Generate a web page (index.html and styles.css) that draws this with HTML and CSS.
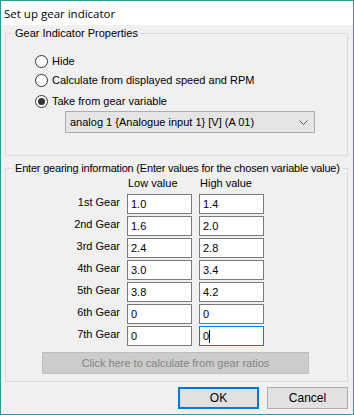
FILE: index.html
```html
<!DOCTYPE html>
<html>
<head>
<title>Set up gear indicator</title>
<link rel="stylesheet" href="styles.css">
</head>
<body>
<div class="window">
    <!-- Title bar -->
    <div class="titlebar">Set up gear indicator</div>

    <div class="client">
        <!-- Gear indicator properties -->
        <fieldset class="group group-props">
            <legend>Gear Indicator Properties</legend>
            <div class="radio radio-first"><span class="radio-dot"></span>Hide</div>
            <div class="radio radio-second"><span class="radio-dot"></span>Calculate from displayed speed and RPM</div>
            <div class="radio radio-third"><span class="radio-dot checked"></span>Take from gear variable</div>
            <div class="combo">
                <span>analog 1 {Analogue input 1} [V] (A 01)</span>
                <svg class="chevron" width="9" height="5" viewBox="0 0 9 5"><path d="M0.5 0.5 L4.5 4.5 L8.5 0.5" fill="none" stroke="#555" stroke-width="1"/></svg>
            </div>
        </fieldset>

        <!-- Gearing information -->
        <fieldset class="group group-gears">
            <legend>Enter gearing information (Enter values for the chosen variable value)</legend>
            <div class="gear-grid">
                <span></span><span class="col-head">Low value</span><span class="col-head">High value</span>
                <span class="gear-label">1st Gear</span><span class="field">1.0</span><span class="field">1.4</span>
                <span class="gear-label">2nd Gear</span><span class="field">1.6</span><span class="field">2.0</span>
                <span class="gear-label">3rd Gear</span><span class="field">2.4</span><span class="field">2.8</span>
                <span class="gear-label">4th Gear</span><span class="field">3.0</span><span class="field">3.4</span>
                <span class="gear-label">5th Gear</span><span class="field">3.8</span><span class="field">4.2</span>
                <span class="gear-label">6th Gear</span><span class="field">0</span><span class="field">0</span>
                <span class="gear-label">7th Gear</span><span class="field">0</span><span class="field focused">0<span class="caret"></span></span>
            </div>
            <div class="calc-btn">Click here to calculate from gear ratios</div>
        </fieldset>

        <!-- Dialog buttons -->
        <div class="actions">
            <div class="btn btn-default">OK</div>
            <div class="btn">Cancel</div>
        </div>
    </div>
</div>
</body>
</html>
```

FILE: styles.css
```css
body {
    margin: 0px;
    background: #f0f0f0;
    font-family: "Liberation Sans", Arial, sans-serif;
    font-size: 11px;
    line-height: 13px;
    color: #000;
}
.window {
    width: 354px;
    height: 415px;
    box-sizing: border-box;
    border: 1px solid #2b9a9c;
    background: #f0f0f0;
}
.titlebar {
    height: 24px;
    background: #fff;
    padding-left: 3px;
    font-family: "Open Sans", "Noto Sans", sans-serif;
    font-size: 11.5px;
    line-height: 25px;
}
.client {
    padding: 0px 5px 0px 4px;
}
.group {
    margin: 0px;
    padding: 0px;
    border: 1px solid #dcdcdc;
    min-width: 0;
}
.group legend {
    margin-left: 7px;
    padding: 0px 2px;
    line-height: 13px;
    white-space: nowrap;
}
.group-props {
    margin-top: 2px;
    padding-bottom: 22px;
}
.group-gears {
    margin-top: 6px;
    padding-bottom: 7px;
}
.group-gears legend {
    letter-spacing: -0.2px;
}
.radio {
    display: flex;
    align-items: center;
    height: 13px;
    margin-left: 29px;
    white-space: nowrap;
}
.radio-first {
    margin-top: 15px;
}
.radio-second {
    margin-top: 6px;
}
.radio-third {
    margin-top: 8px;
}
.radio-dot {
    width: 13px;
    height: 13px;
    box-sizing: border-box;
    border: 1px solid #333;
    border-radius: 50%;
    background: #fff;
    margin-right: 4px;
    display: flex;
    align-items: center;
    justify-content: center;
}
.radio-dot.checked::after {
    content: "";
    width: 7px;
    height: 7px;
    border-radius: 50%;
    background: #333;
}
.combo {
    margin: 3px 0px 0px 59px;
    width: 250px;
    height: 22px;
    box-sizing: border-box;
    border: 1px solid #adadad;
    background: #e5e5e5;
    display: flex;
    align-items: center;
    justify-content: space-between;
    padding: 0px 6px 0px 4px;
}
.gear-grid {
    display: grid;
    grid-template-columns: 114px 65px 65px;
    column-gap: 7px;
    row-gap: 2px;
    margin-top: 2px;
}
.col-head {
    height: 15px;
    line-height: 13px;
    padding-left: 1px;
}
.gear-label {
    text-align: right;
    line-height: 16px;
}
.field {
    height: 20px;
    box-sizing: border-box;
    border: 1px solid #7a7a7a;
    background: #fff;
    padding-left: 3px;
    line-height: 19px;
    display: flex;
    align-items: center;
}
.field.focused {
    border-color: #0078d7;
}
.caret {
    width: 1px;
    height: 13px;
    background: #000;
}
.calc-btn {
    margin: 6px 0px 0px 36px;
    width: 267px;
    height: 22px;
    box-sizing: border-box;
    border: 1px solid #bfbfbf;
    background: #cccccc;
    color: #838383;
    text-align: center;
    line-height: 20px;
}
.actions {
    display: flex;
    justify-content: flex-end;
    gap: 8px;
    margin-top: 5px;
}
.btn {
    width: 81px;
    height: 22px;
    box-sizing: border-box;
    border: 1px solid #adadad;
    background: #e1e1e1;
    text-align: center;
    line-height: 20px;
    font-size: 12px;
}
.btn-default {
    border: 2px solid #0078d7;
    line-height: 18px;
}
```
